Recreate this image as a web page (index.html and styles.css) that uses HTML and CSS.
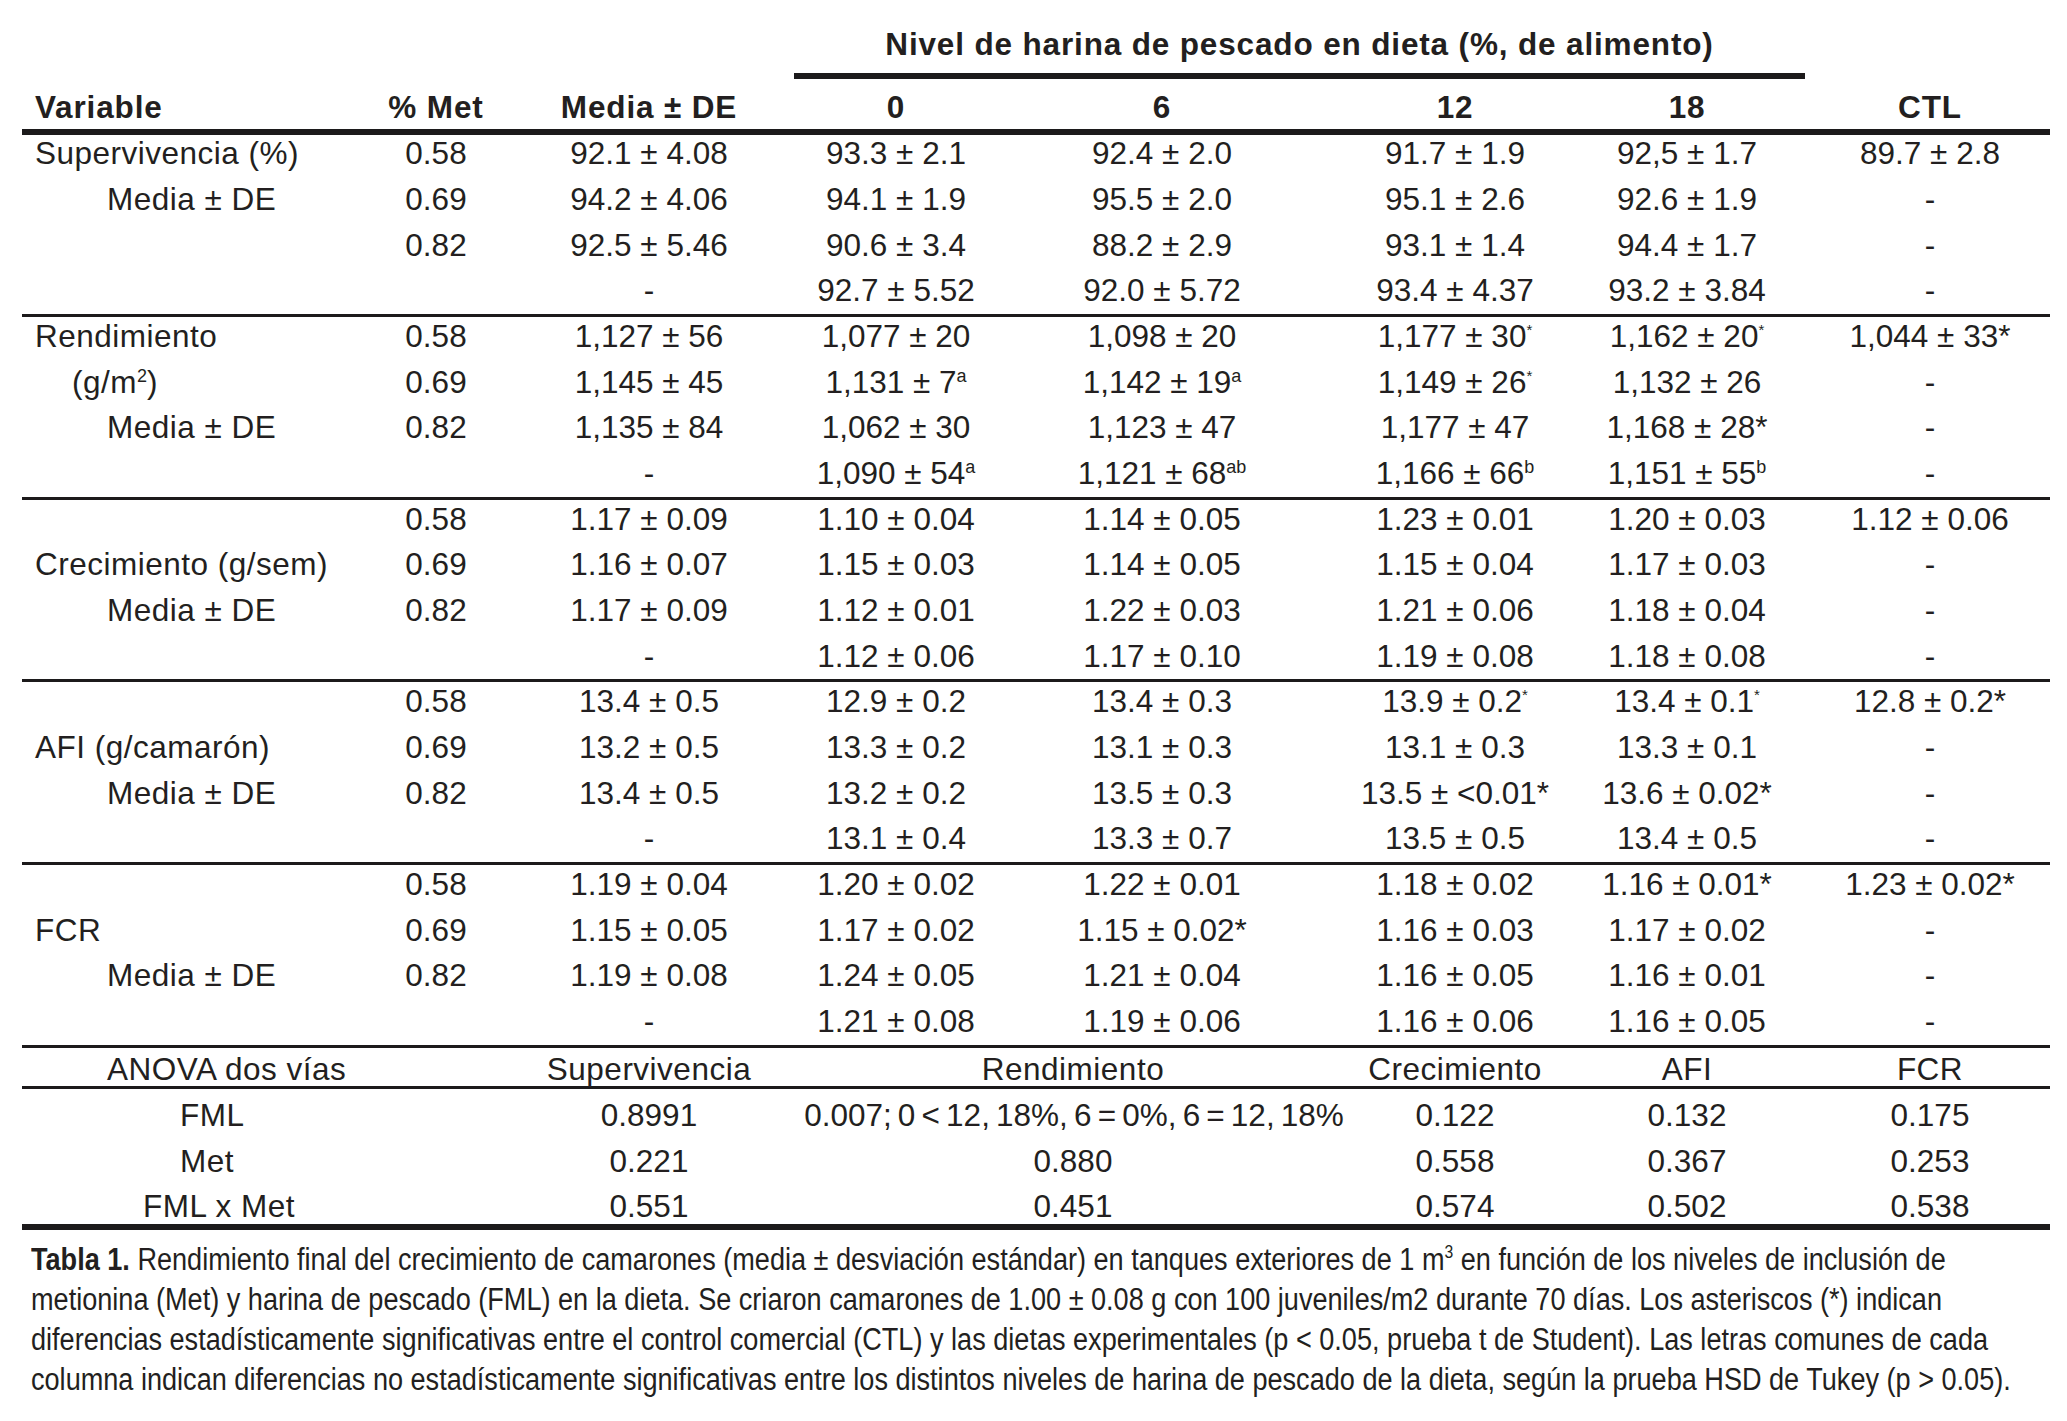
FILE: index.html
```html
<!DOCTYPE html>
<html lang="es">
<head>
<meta charset="utf-8">
<title>Tabla 1</title>
<link rel="stylesheet" href="styles.css">
</head>
<body>
<div class="page">
  <div class="tbl">
    <div class="row span-row"><div class="span-cell">Nivel de harina de pescado en dieta (%, de alimento)</div></div>
    <div class="row head">
      <div class="c1">Variable</div><div>% Met</div><div>Media ± DE</div><div>0</div><div>6</div><div>12</div><div>18</div><div>CTL</div>
    </div>
    <div class="body">
      <div class="group">
        <div class="row"><div class="c1">Supervivencia (%)</div><div>0.58</div><div>92.1 ± 4.08</div><div>93.3 ± 2.1</div><div>92.4 ± 2.0</div><div>91.7 ± 1.9</div><div>92,5 ± 1.7</div><div>89.7 ± 2.8</div></div>
        <div class="row"><div class="c1 ind">Media ± DE</div><div>0.69</div><div>94.2 ± 4.06</div><div>94.1 ± 1.9</div><div>95.5 ± 2.0</div><div>95.1 ± 2.6</div><div>92.6 ± 1.9</div><div>-</div></div>
        <div class="row"><div class="c1"></div><div>0.82</div><div>92.5 ± 5.46</div><div>90.6 ± 3.4</div><div>88.2 ± 2.9</div><div>93.1 ± 1.4</div><div>94.4 ± 1.7</div><div>-</div></div>
        <div class="row"><div class="c1"></div><div></div><div>-</div><div>92.7 ± 5.52</div><div>92.0 ± 5.72</div><div>93.4 ± 4.37</div><div>93.2 ± 3.84</div><div>-</div></div>
      </div>
      <div class="group">
        <div class="row"><div class="c1">Rendimiento</div><div>0.58</div><div>1,127 ± 56</div><div>1,077 ± 20</div><div>1,098 ± 20</div><div>1,177 ± 30<sup class="ast">*</sup></div><div>1,162 ± 20<sup class="ast">*</sup></div><div>1,044 ± 33*</div></div>
        <div class="row"><div class="c1 ind-s">(g/m<sup class="sq">2</sup>)</div><div>0.69</div><div>1,145 ± 45</div><div>1,131 ± 7<sup>a</sup></div><div>1,142 ± 19<sup>a</sup></div><div>1,149 ± 26<sup class="ast">*</sup></div><div>1,132 ± 26</div><div>-</div></div>
        <div class="row"><div class="c1 ind">Media ± DE</div><div>0.82</div><div>1,135 ± 84</div><div>1,062 ± 30</div><div>1,123 ± 47</div><div>1,177 ± 47</div><div>1,168 ± 28*</div><div>-</div></div>
        <div class="row"><div class="c1"></div><div></div><div>-</div><div>1,090 ± 54<sup>a</sup></div><div>1,121 ± 68<sup>ab</sup></div><div>1,166 ± 66<sup>b</sup></div><div>1,151 ± 55<sup>b</sup></div><div>-</div></div>
      </div>
      <div class="group">
        <div class="row"><div class="c1"></div><div>0.58</div><div>1.17 ± 0.09</div><div>1.10 ± 0.04</div><div>1.14 ± 0.05</div><div>1.23 ± 0.01</div><div>1.20 ± 0.03</div><div>1.12 ± 0.06</div></div>
        <div class="row"><div class="c1">Crecimiento (g/sem)</div><div>0.69</div><div>1.16 ± 0.07</div><div>1.15 ± 0.03</div><div>1.14 ± 0.05</div><div>1.15 ± 0.04</div><div>1.17 ± 0.03</div><div>-</div></div>
        <div class="row"><div class="c1 ind">Media ± DE</div><div>0.82</div><div>1.17 ± 0.09</div><div>1.12 ± 0.01</div><div>1.22 ± 0.03</div><div>1.21 ± 0.06</div><div>1.18 ± 0.04</div><div>-</div></div>
        <div class="row"><div class="c1"></div><div></div><div>-</div><div>1.12 ± 0.06</div><div>1.17 ± 0.10</div><div>1.19 ± 0.08</div><div>1.18 ± 0.08</div><div>-</div></div>
      </div>
      <div class="group">
        <div class="row"><div class="c1"></div><div>0.58</div><div>13.4 ± 0.5</div><div>12.9 ± 0.2</div><div>13.4 ± 0.3</div><div>13.9 ± 0.2<sup class="ast">*</sup></div><div>13.4 ± 0.1<sup class="ast">*</sup></div><div>12.8 ± 0.2*</div></div>
        <div class="row"><div class="c1">AFI (g/camarón)</div><div>0.69</div><div>13.2 ± 0.5</div><div>13.3 ± 0.2</div><div>13.1 ± 0.3</div><div>13.1 ± 0.3</div><div>13.3 ± 0.1</div><div>-</div></div>
        <div class="row"><div class="c1 ind">Media ± DE</div><div>0.82</div><div>13.4 ± 0.5</div><div>13.2 ± 0.2</div><div>13.5 ± 0.3</div><div>13.5 ± &lt;0.01*</div><div>13.6 ± 0.02*</div><div>-</div></div>
        <div class="row"><div class="c1"></div><div></div><div>-</div><div>13.1 ± 0.4</div><div>13.3 ± 0.7</div><div>13.5 ± 0.5</div><div>13.4 ± 0.5</div><div>-</div></div>
      </div>
      <div class="group">
        <div class="row"><div class="c1"></div><div>0.58</div><div>1.19 ± 0.04</div><div>1.20 ± 0.02</div><div>1.22 ± 0.01</div><div>1.18 ± 0.02</div><div>1.16 ± 0.01*</div><div>1.23 ± 0.02*</div></div>
        <div class="row"><div class="c1">FCR</div><div>0.69</div><div>1.15 ± 0.05</div><div>1.17 ± 0.02</div><div>1.15 ± 0.02*</div><div>1.16 ± 0.03</div><div>1.17 ± 0.02</div><div>-</div></div>
        <div class="row"><div class="c1 ind">Media ± DE</div><div>0.82</div><div>1.19 ± 0.08</div><div>1.24 ± 0.05</div><div>1.21 ± 0.04</div><div>1.16 ± 0.05</div><div>1.16 ± 0.01</div><div>-</div></div>
        <div class="row"><div class="c1"></div><div></div><div>-</div><div>1.21 ± 0.08</div><div>1.19 ± 0.06</div><div>1.16 ± 0.06</div><div>1.16 ± 0.05</div><div>-</div></div>
      </div>
    </div>
    <div class="row anova-head">
      <div class="alabel a-title">ANOVA dos vías</div><div></div><div class="txt">Supervivencia</div><div class="rend txt">Rendimiento</div><div class="txt">Crecimiento</div><div class="txt">AFI</div><div class="txt">FCR</div>
    </div>
    <div class="anova-body">
      <div class="row"><div class="alabel a-fml">FML</div><div></div><div>0.8991</div><div class="rend tight">0.007; 0 &lt; 12, 18%, 6 = 0%, 6 = 12, 18%</div><div>0.122</div><div>0.132</div><div>0.175</div></div>
      <div class="row"><div class="alabel a-met">Met</div><div></div><div>0.221</div><div class="rend">0.880</div><div>0.558</div><div>0.367</div><div>0.253</div></div>
      <div class="row"><div class="alabel a-x">FML x Met</div><div></div><div>0.551</div><div class="rend">0.451</div><div>0.574</div><div>0.502</div><div>0.538</div></div>
    </div>
  </div>
  <p class="caption">
    <span class="cl"><b>Tabla 1.</b> Rendimiento final del crecimiento de camarones (media ± desviación estándar) en tanques exteriores de 1 m<sup>3</sup> en función de los niveles de inclusión de</span>
    <span class="cl">metionina (Met) y harina de pescado (FML) en la dieta. Se criaron camarones de 1.00 ± 0.08 g con 100 juveniles/m2 durante 70 días. Los asteriscos (*) indican</span>
    <span class="cl">diferencias estadísticamente significativas entre el control comercial (CTL) y las dietas experimentales (p &lt; 0.05, prueba t de Student). Las letras comunes de cada</span>
    <span class="cl">columna indican diferencias no estadísticamente significativas entre los distintos niveles de harina de pescado de la dieta, según la prueba HSD de Tukey (p &gt; 0.05).</span>
  </p>
</div>
</body>
</html>
```

FILE: styles.css
```css
html, body {
  margin: 0;
  padding: 0;
  background: #ffffff;
}

body {
  font-family: "Liberation Sans", Arial, Helvetica, sans-serif;
  color: #231f20;
}

.page {
  padding: 22.4px 0 0 22px;
}

.tbl {
  width: 2028px;
  font-size: 31.5px;
}

.row {
  display: grid;
  grid-template-columns: 366px 96px 330px 164px 368px 218px 246px 240px;
  text-align: center;
  white-space: nowrap;
}

.c1 {
  text-align: left;
  padding-left: 13px;
  letter-spacing: 0.5px;
}

.c1.ind {
  padding-left: 85px;
}

.c1.ind-s {
  padding-left: 50px;
}

.span-row .span-cell {
  grid-column: 4 / 8;
  margin: 0 5px 0 -20px;
  font-weight: bold;
  letter-spacing: 0.85px;
  line-height: 45.66px;
  padding-bottom: 5px;
  border-bottom: 6px solid #1c1a1b;
}

.head {
  font-weight: bold;
  letter-spacing: 0.85px;
  padding-top: 7px;
  line-height: 43px;
  border-bottom: 6px solid #1c1a1b;
}

.head .c1 {
  letter-spacing: 0.85px;
}

.body {
  margin-top: -3.66px;
}

.body .row,
.anova-body .row {
  height: 45.66px;
  line-height: 45.66px;
}

.group + .group {
  background: linear-gradient(#1c1a1b, #1c1a1b) top left / 100% 3px no-repeat;
}

sup {
  font-size: 18px;
  line-height: 0;
  vertical-align: 11px;
  letter-spacing: 0;
}

sup.ast {
  font-size: 15px;
  vertical-align: 12px;
}

sup.sq {
  font-size: 18px;
  vertical-align: 11px;
}

.anova-head {
  box-sizing: border-box;
  height: 44.4px;
  padding-top: 8px;
  line-height: 33.4px;
  border-bottom: 3px solid #1c1a1b;
  background: linear-gradient(#1c1a1b, #1c1a1b) top left / 100% 3px no-repeat;
}

.txt {
  letter-spacing: 0.5px;
}

.alabel {
  text-align: left;
  letter-spacing: 0.5px;
}

.a-title {
  padding-left: 85px;
}

.a-fml {
  padding-left: 158px;
}

.a-met {
  padding-left: 158px;
}

.a-x {
  padding-left: 121px;
}

.rend {
  grid-column: 4 / 6;
  padding-right: 14px;
}

.rend.tight {
  margin: 0 -14px 0 -26px;
  padding-right: 0;
  word-spacing: -2.6px;
}

.anova-body {
  padding-top: 4px;
  background: linear-gradient(#1c1a1b, #1c1a1b) bottom left / 100% 6px no-repeat;
}

.caption {
  margin: 10px 0 0 0;
  padding-left: 9px;
  font-size: 31px;
  line-height: 40px;
  overflow: hidden;
}

.caption .cl {
  display: block;
  white-space: nowrap;
  transform-origin: 0 0;
  transform: scaleX(0.874);
}

.caption sup {
  font-size: 18px;
  vertical-align: 12px;
}
```
